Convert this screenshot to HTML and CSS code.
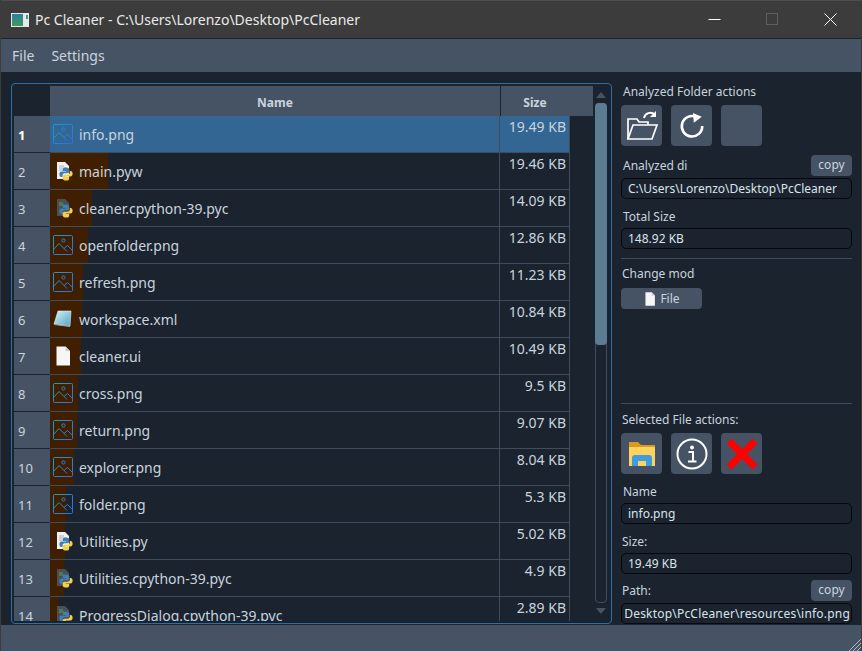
FILE: index.html
```html
<!DOCTYPE html>
<html lang="en">
<head>
    <meta charset="UTF-8">
    <title>Pc Cleaner</title>
    <link rel="stylesheet" href="styles.css">
</head>
<body>

    <svg class="defs" width="0" height="0">
        <defs>
            <linearGradient id="imgBlue" x1="0" y1="0" x2="1" y2="1">
                <stop offset="0" stop-color="#1f9bc4"/>
                <stop offset="1" stop-color="#2f6fe0"/>
            </linearGradient>
            <linearGradient id="appIcon" x1="0" y1="0" x2="0" y2="1">
                <stop offset="0" stop-color="#2b7fa0"/>
                <stop offset="1" stop-color="#3f9a5c"/>
            </linearGradient>
            <linearGradient id="note" x1="0" y1="0" x2="1" y2="1">
                <stop offset="0" stop-color="#d9f1f6"/>
                <stop offset="1" stop-color="#4fa6c4"/>
            </linearGradient>
            <symbol id="i-image" viewBox="0 0 20 20">
                <rect x="0.5" y="0.5" width="19" height="19" rx="1" fill="none" stroke="url(#imgBlue)"/>
                <circle cx="10.5" cy="5.5" r="1.6" fill="none" stroke="url(#imgBlue)"/>
                <path d="M0.5 14.5L6 8.5L14 16.5M11 13.5L14.5 10.5L19.5 15.5" fill="none" stroke="url(#imgBlue)"/>
            </symbol>
            <symbol id="i-snake" viewBox="0 0 14 14">
                <path fill="#3f7fb5" d="M7 0.5C4 0.5 3.8 1.8 3.8 2.6V4H7.2V4.6H2.4C1 4.6 0.4 5.8 0.4 7.2S1 10 2.4 10H3.6V8.4C3.6 7.2 4.6 6.3 5.8 6.3H8.6C9.6 6.3 10.3 5.5 10.3 4.6V2.6C10.3 1.4 9 0.5 7 0.5Z"/>
                <path fill="#f5cf47" d="M7 13.5C10 13.5 10.2 12.2 10.2 11.4V10H6.8V9.4H11.6C13 9.4 13.6 8.2 13.6 6.8S13 4 11.6 4H10.8V5.6C10.8 6.8 9.8 7.7 8.6 7.7H5.4C4.4 7.7 3.7 8.5 3.7 9.4V11.4C3.7 12.6 5 13.5 7 13.5Z"/>
            </symbol>
            <symbol id="i-py" viewBox="0 0 20 20">
                <path fill="#f2f2f2" d="M4 1H12L16 5V18H4Z"/>
                <path stroke="#aab4c4" d="M6 5H11M6 7H13M6 9H10" fill="none"/>
                <use href="#i-snake" x="6" y="6" width="14" height="14"/>
            </symbol>
            <symbol id="i-pyc" viewBox="0 0 20 20">
                <path fill="#4a4f52" d="M4 1H12L16 5V18H4Z"/>
                <path stroke="#5d9a68" d="M6 5H10M6 7H11" fill="none"/>
                <use href="#i-snake" x="6" y="6" width="14" height="14"/>
            </symbol>
            <symbol id="i-note" viewBox="0 0 20 20">
                <path fill="url(#note)" stroke="#e8eef0" stroke-width="0.6" d="M5 2H18L17 17L1 15Z"/>
                <path fill="#9aa7ad" d="M1 15L17 17L17 18L1.5 16Z"/>
            </symbol>
            <symbol id="i-doc" viewBox="0 0 20 20">
                <path fill="#f6f6f6" d="M3.500 0.500H12.500L17 5V19.500H3.500Z"/>
                <path fill="#c9ccd0" d="M12.500 0.500V5H17Z"/>
            </symbol>
        </defs>
    </svg>

    <div class="titlebar">
        <svg class="app-icon" width="18" height="14" viewBox="0 0 18 14">
            <rect width="18" height="14" fill="#e6e8ea"/>
            <rect x="1" y="1" width="11" height="12" fill="url(#appIcon)"/>
            <rect x="15" y="2" width="2" height="4" fill="#3f9a7c"/>
        </svg>
        <span class="title-text">Pc Cleaner - C:\Users\Lorenzo\Desktop\PcCleaner</span>
        <div class="win-buttons">
            <svg width="13" height="13" viewBox="0 0 13 13"><path d="M0.500 6.500H12.500" stroke="#fff" fill="none"/></svg>
            <svg width="13" height="13" viewBox="0 0 13 13"><rect x="0.500" y="0.500" width="11" height="11" stroke="#5f5f5f" fill="none"/></svg>
            <svg width="13" height="13" viewBox="0 0 13 13"><path d="M0.500 0.500L12.500 12.500M12.500 0.500L0.500 12.500" stroke="#fff" fill="none"/></svg>
        </div>
    </div>

    <div class="menubar">
        <span>File</span>
        <span>Settings</span>
    </div>

    <div class="main">
        <div class="frame">
            <div class="table">
                <div class="header">
                    <div class="corner"></div>
                    <div class="hname">Name</div>
                    <div class="hsize">Size</div>
                </div>

                <div class="row selected">
                    <div class="rhead">1</div>
                    <div class="cname"><svg class="ficon"><use href="#i-image"/></svg>info.png</div>
                    <div class="csize">19.49 KB</div>
                </div>
                <div class="row">
                    <div class="rhead">2</div>
                    <div class="cname" style="--bar: 58px"><svg class="ficon"><use href="#i-py"/></svg>main.pyw</div>
                    <div class="csize">19.46 KB</div>
                </div>
                <div class="row">
                    <div class="rhead">3</div>
                    <div class="cname" style="--bar: 42px"><svg class="ficon"><use href="#i-pyc"/></svg>cleaner.cpython-39.pyc</div>
                    <div class="csize">14.09 KB</div>
                </div>
                <div class="row">
                    <div class="rhead">4</div>
                    <div class="cname" style="--bar: 38px"><svg class="ficon"><use href="#i-image"/></svg>openfolder.png</div>
                    <div class="csize">12.86 KB</div>
                </div>
                <div class="row">
                    <div class="rhead">5</div>
                    <div class="cname" style="--bar: 33px"><svg class="ficon"><use href="#i-image"/></svg>refresh.png</div>
                    <div class="csize">11.23 KB</div>
                </div>
                <div class="row">
                    <div class="rhead">6</div>
                    <div class="cname" style="--bar: 32px"><svg class="ficon"><use href="#i-note"/></svg>workspace.xml</div>
                    <div class="csize">10.84 KB</div>
                </div>
                <div class="row">
                    <div class="rhead">7</div>
                    <div class="cname" style="--bar: 31px"><svg class="ficon"><use href="#i-doc"/></svg>cleaner.ui</div>
                    <div class="csize">10.49 KB</div>
                </div>
                <div class="row">
                    <div class="rhead">8</div>
                    <div class="cname" style="--bar: 28px"><svg class="ficon"><use href="#i-image"/></svg>cross.png</div>
                    <div class="csize">9.5 KB</div>
                </div>
                <div class="row">
                    <div class="rhead">9</div>
                    <div class="cname" style="--bar: 27px"><svg class="ficon"><use href="#i-image"/></svg>return.png</div>
                    <div class="csize">9.07 KB</div>
                </div>
                <div class="row">
                    <div class="rhead">10</div>
                    <div class="cname" style="--bar: 24px"><svg class="ficon"><use href="#i-image"/></svg>explorer.png</div>
                    <div class="csize">8.04 KB</div>
                </div>
                <div class="row">
                    <div class="rhead">11</div>
                    <div class="cname" style="--bar: 16px"><svg class="ficon"><use href="#i-image"/></svg>folder.png</div>
                    <div class="csize">5.3 KB</div>
                </div>
                <div class="row">
                    <div class="rhead">12</div>
                    <div class="cname" style="--bar: 15px"><svg class="ficon"><use href="#i-py"/></svg>Utilities.py</div>
                    <div class="csize">5.02 KB</div>
                </div>
                <div class="row">
                    <div class="rhead">13</div>
                    <div class="cname" style="--bar: 14px"><svg class="ficon"><use href="#i-pyc"/></svg>Utilities.cpython-39.pyc</div>
                    <div class="csize">4.9 KB</div>
                </div>
                <div class="row">
                    <div class="rhead">14</div>
                    <div class="cname" style="--bar: 8px"><svg class="ficon"><use href="#i-pyc"/></svg>ProgressDialog.cpython-39.pyc</div>
                    <div class="csize">2.89 KB</div>
                </div>
            </div>

            <div class="scrollbar">
                <div class="arrow-up"></div>
                <div class="track">
                    <div class="handle"></div>
                </div>
                <div class="arrow-down"></div>
            </div>
        </div>

        <div class="side">
            <div class="label head-label w134">Analyzed Folder actions</div>
            <div class="icon-row">
                <div class="icon-btn">
                    <svg width="32" height="32" viewBox="0 0 32 32" fill="none" stroke="#fff" stroke-width="1.700">
                        <path d="M2 29V9H11L13 12H22V15"/>
                        <path d="M2 29H26L31 15H7L2 29Z"/>
                        <path d="M18 8C19 3 25 1 29 5" stroke-width="2"/>
                        <path d="M30 1V7H24Z" fill="#fff" stroke="none"/>
                    </svg>
                </div>
                <div class="icon-btn">
                    <svg width="26" height="26" viewBox="0 0 28 28" fill="none" stroke="#fff" stroke-width="2.800">
                        <path d="M19 4.500A11 11 0 1 0 25 14"/>
                        <path d="M15 0L24.500 4L16 10.500Z" fill="#fff" stroke="none"/>
                    </svg>
                </div>
                <div class="icon-btn"></div>
            </div>

            <div class="label-row mt9">
                <div class="label w64">Analyzed directory</div>
                <div class="copy-btn">copy</div>
            </div>
            <div class="field">C:\Users\Lorenzo\Desktop\PcCleaner</div>

            <div class="label w54 mt9">Total Size</div>
            <div class="field mt3">148.92 KB</div>

            <div class="sep mt9"></div>

            <div class="label w72 mt6">Change mode</div>
            <div class="mode-btn"><svg class="mode-icon"><use href="#i-doc"/></svg>File</div>

            <div class="spacer"></div>

            <div class="sep"></div>
            <div class="label mt7 pl1">Selected File actions:</div>
            <div class="icon-row low">
                <div class="icon-btn">
                    <svg width="28" height="26" viewBox="0 0 28 26">
                        <path fill="#d99a1e" d="M1 1H10L13 4H27V9H1Z"/>
                        <path fill="#fbd35e" d="M1 6H27V25H1Z"/>
                        <path fill="#3f9ddf" d="M4 25V17C4 15 5 14 7 14H21C23 14 24 15 24 17V25H18V20H10V25Z"/>
                        <rect x="10" y="20" width="8" height="2" fill="#fbd35e"/>
                    </svg>
                </div>
                <div class="icon-btn">
                    <svg width="32" height="32" viewBox="0 0 32 32" fill="none" stroke="#fff">
                        <circle cx="16" cy="16" r="14.500" stroke-width="2"/>
                        <circle cx="16" cy="9.500" r="2" fill="#fff" stroke="none"/>
                        <path d="M12.500 14H17V23M12 23.500H20.500" stroke-width="2"/>
                    </svg>
                </div>
                <div class="icon-btn">
                    <svg width="32" height="32" viewBox="0 0 32 32">
                        <path d="M3 3L29 29M29 3L3 29" stroke="#f00" stroke-width="7" fill="none"/>
                    </svg>
                </div>
            </div>

            <div class="label mt9">Name</div>
            <div class="field mt3">info.png</div>
            <div class="label mt9 pl1">Size:</div>
            <div class="field mt3">19.49 KB</div>

            <div class="label-row mt6">
                <div class="label pl1">Path:</div>
                <div class="copy-btn">copy</div>
            </div>
            <div class="field path"><div class="path-clip"><span>C:\Users\Lorenzo\Desktop\PcCleaner\resources\info.png</span></div></div>
        </div>
    </div>

    <div class="statusbar">
        <svg width="13" height="13" viewBox="0 0 13 13" stroke="#aeb6c0" fill="none">
            <path d="M1 13L13 1M5 13L13 5M9 13L13 9"/>
        </svg>
    </div>

</body>
</html>
```

FILE: styles.css
```css
/* Base */
body {
    margin: 0;
    height: 651px;
    overflow: hidden;
    display: flex;
    flex-direction: column;
    background-color: #1a232e;
    color: #c9d3de;
    font-family: "Noto Sans", "Open Sans", sans-serif;
    font-size: 12px;
    box-sizing: border-box;
    border-left: 1px solid #3c3c3c;
    border-right: 1px solid #3c3c3c;
}

.defs {
    display: block;
    height: 0;
}

/* Title bar */
.titlebar {
    height: 37px;
    flex: none;
    display: flex;
    align-items: center;
    background-color: #3c3c3c;
    border-top: 1px solid #4e4e4e;
    border-bottom: 1px solid #1a232e;
    padding-left: 10px;
    color: #eaeaea;
    font-size: 14px;
}

.app-icon {
    margin-right: 6px;
}

.title-text {
    flex: 1;
}

.win-buttons {
    display: flex;
    gap: 45px;
    padding-right: 24px;
}

/* Menu */
.menubar {
    height: 33px;
    flex: none;
    display: flex;
    align-items: center;
    gap: 17px;
    padding-left: 11px;
    background-color: #465364;
    font-size: 14px;
}

/* Main area */
.main {
    height: 553px;
    box-sizing: border-box;
    flex: none;
    display: flex;
    padding: 11px 9px 0 10px;
}

.frame {
    width: 601px;
    height: 541px;
    flex: none;
    box-sizing: border-box;
    display: flex;
    padding: 2px;
    border: 1px solid #2a6fa8;
    border-radius: 4px;
    overflow: hidden;
}

.table {
    width: 579px;
    flex: none;
    overflow: hidden;
    font-size: 14px;
}

.header {
    display: flex;
    height: 30px;
    font-weight: bold;
    font-size: 12px;
}

.corner {
    width: 36px;
}

.hname {
    width: 450px;
    background-color: #465364;
    border-right: 1px solid #1a232e;
    text-align: center;
    line-height: 33px;
}

.hsize {
    width: 92px;
    background-color: #465364;
    text-align: center;
    line-height: 33px;
    padding-right: 24px;
    box-sizing: border-box;
}

.row {
    display: flex;
    width: 556px;
    height: 37px;
    box-sizing: border-box;
    border-bottom: 1px solid #3f4d5c;
}

.rhead {
    width: 36px;
    flex: none;
    margin-bottom: -1px;
    border-bottom: 1px solid #1a232e;
    background-color: #465364;
    padding-left: 4px;
    box-sizing: border-box;
    line-height: 38px;
    font-size: 13px;
}

.cname {
    width: 450px;
    flex: none;
    box-sizing: border-box;
    display: flex;
    align-items: center;
    gap: 6px;
    padding-left: 3px;
    border-right: 1px solid #3f4d5c;
    white-space: nowrap;
    background: linear-gradient(#401e00, #401e00) no-repeat;
    background-size: var(--bar, 0) 100%;
}

.ficon {
    width: 20px;
    height: 20px;
    flex: none;
}

.csize {
    width: 70px;
    flex: none;
    box-sizing: border-box;
    padding-right: 3px;
    border-right: 1px solid #3f4d5c;
    text-align: right;
    line-height: 22px;
}

.selected {
    background-color: #336693;
}

.selected .rhead {
    font-weight: bold;
    color: #fff;
}

/* Scroll bar */
.scrollbar {
    width: 16px;
    margin-left: 0;
    flex: none;
    display: flex;
    flex-direction: column;
    align-items: center;
}

.arrow-up {
    margin-top: 6px;
    border-left: 5px solid transparent;
    border-right: 5px solid transparent;
    border-bottom: 6px solid #465364;
}

.arrow-down {
    margin-top: 5px;
    margin-bottom: 7px;
    border-left: 5px solid transparent;
    border-right: 5px solid transparent;
    border-top: 6px solid #465364;
}

.track {
    flex: 1;
    width: 12px;
    margin-top: 5px;
    box-sizing: border-box;
    border: 1px solid #3f4d5c;
    border-radius: 4px;
}

.handle {
    height: 242px;
    margin: -1px;
    background-color: #5c7c94;
    border-radius: 4px;
}

/* Side panel */
.side {
    width: 231px;
    height: 541px;
    flex: none;
    margin-left: 9px;
    display: flex;
    flex-direction: column;
}

.label {
    height: 17px;
    line-height: 17px;
    padding-left: 2px;
    white-space: nowrap;
    overflow: hidden;
    flex: none;
    box-sizing: border-box;
}

.head-label {
    margin-bottom: 5px;
}

.w134 { width: 137px; }
.w64 { width: 66px; }
.w54 { width: 56px; }
.w72 { width: 74px; padding-left: 1px; }

.mt3 { margin-top: 3px; }
.mt6 { margin-top: 6px; }
.mt7 { margin-top: 7px; }
.mt9 { margin-top: 9px; }
.pl1 { padding-left: 1px; }

.icon-row {
    display: flex;
    gap: 9px;
    flex: none;
}

.icon-row.low {
    margin-top: 5px;
}

.icon-btn {
    width: 41px;
    height: 41px;
    border-radius: 4px;
    background-color: #465364;
    display: flex;
    align-items: center;
    justify-content: center;
}

.label-row {
    display: flex;
    justify-content: space-between;
    align-items: center;
    height: 21px;
    flex: none;
}

.copy-btn {
    width: 41px;
    height: 21px;
    border-radius: 4px;
    background-color: #465364;
    text-align: center;
    line-height: 20px;
}

.field {
    height: 21px;
    flex: none;
    margin-top: 2px;
    box-sizing: border-box;
    border: 1px solid #05080c;
    border-radius: 5px;
    padding-left: 6px;
    line-height: 20px;
    white-space: nowrap;
    overflow: hidden;
    color: #dbe3ea;
}

.field.mt3 {
    margin-top: 3px;
}

/* Texto longo: mostra só o final do caminho */
.field.path {
    padding: 0 1px 0 3px;
}

.path-clip {
    display: flex;
    justify-content: flex-end;
    overflow: hidden;
    letter-spacing: 0.2px;
}

.sep {
    height: 1px;
    flex: none;
    background-color: #3f4d5c;
}

.mode-btn {
    width: 81px;
    height: 21px;
    flex: none;
    margin-top: 6px;
    border-radius: 4px;
    background-color: #465364;
    display: flex;
    align-items: center;
    justify-content: center;
    gap: 3px;
}

.mode-icon {
    width: 14px;
    height: 14px;
}

.spacer {
    flex: 1;
}

/* Status bar */
.statusbar {
    flex: 1;
    min-height: 0;
    background-color: #465364;
    display: flex;
    justify-content: flex-end;
    align-items: flex-end;
}
```
